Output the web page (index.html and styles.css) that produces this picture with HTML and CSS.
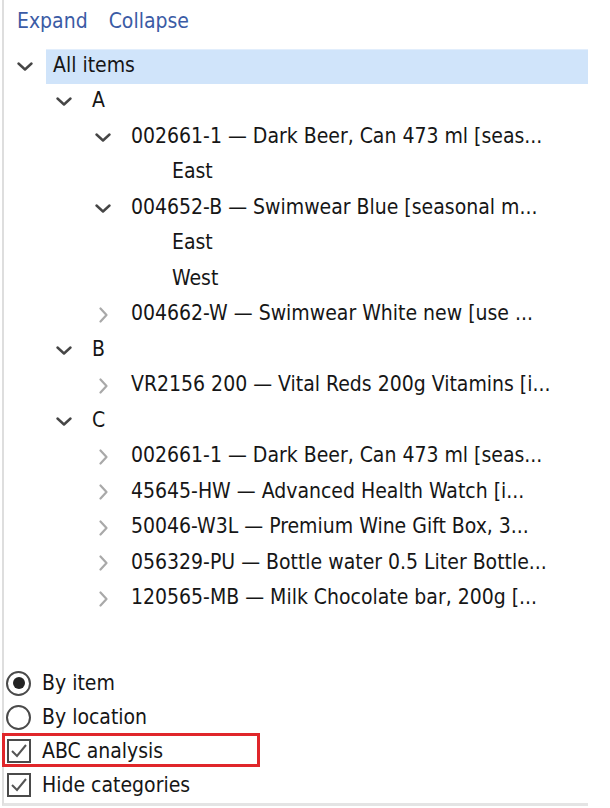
FILE: index.html
```html
<!DOCTYPE html>
<html>
<head>
<meta charset="utf-8">
<link rel="stylesheet" href="styles.css">
</head>
<body>
<div class="panel">
  <div class="toolbar">
    <span class="link">Expand</span>
    <span class="link">Collapse</span>
  </div>
  <div class="tree">
    <div class="row l0"><span class="tw"><svg width="16" height="9" viewBox="0 0 16 9"><polyline class="open" points="1.5,1.5 8,7.5 14.5,1.5"/></svg></span><span class="label selected">All items</span></div>
    <div class="row l1"><span class="tw"><svg width="16" height="9" viewBox="0 0 16 9"><polyline class="open" points="1.5,1.5 8,7.5 14.5,1.5"/></svg></span><span class="label">A</span></div>
    <div class="row l2"><span class="tw"><svg width="16" height="9" viewBox="0 0 16 9"><polyline class="open" points="1.5,1.5 8,7.5 14.5,1.5"/></svg></span><span class="label">002661-1 — Dark Beer, Can 473 ml [seas...</span></div>
    <div class="row l3"><span class="tw"></span><span class="label">East</span></div>
    <div class="row l2"><span class="tw"><svg width="16" height="9" viewBox="0 0 16 9"><polyline class="open" points="1.5,1.5 8,7.5 14.5,1.5"/></svg></span><span class="label">004652-B — Swimwear Blue [seasonal m...</span></div>
    <div class="row l3"><span class="tw"></span><span class="label">East</span></div>
    <div class="row l3"><span class="tw"></span><span class="label">West</span></div>
    <div class="row l2"><span class="tw"><svg width="9" height="16" viewBox="0 0 9 16"><polyline class="closed" points="1.5,1.5 7.5,8 1.5,14.5"/></svg></span><span class="label">004662-W — Swimwear White new [use ...</span></div>
    <div class="row l1"><span class="tw"><svg width="16" height="9" viewBox="0 0 16 9"><polyline class="open" points="1.5,1.5 8,7.5 14.5,1.5"/></svg></span><span class="label">B</span></div>
    <div class="row l2"><span class="tw"><svg width="9" height="16" viewBox="0 0 9 16"><polyline class="closed" points="1.5,1.5 7.5,8 1.5,14.5"/></svg></span><span class="label">VR2156 200 — Vital Reds 200g Vitamins [i...</span></div>
    <div class="row l1"><span class="tw"><svg width="16" height="9" viewBox="0 0 16 9"><polyline class="open" points="1.5,1.5 8,7.5 14.5,1.5"/></svg></span><span class="label">C</span></div>
    <div class="row l2"><span class="tw"><svg width="9" height="16" viewBox="0 0 9 16"><polyline class="closed" points="1.5,1.5 7.5,8 1.5,14.5"/></svg></span><span class="label">002661-1 — Dark Beer, Can 473 ml [seas...</span></div>
    <div class="row l2"><span class="tw"><svg width="9" height="16" viewBox="0 0 9 16"><polyline class="closed" points="1.5,1.5 7.5,8 1.5,14.5"/></svg></span><span class="label">45645-HW — Advanced Health Watch [i...</span></div>
    <div class="row l2"><span class="tw"><svg width="9" height="16" viewBox="0 0 9 16"><polyline class="closed" points="1.5,1.5 7.5,8 1.5,14.5"/></svg></span><span class="label">50046-W3L — Premium Wine Gift Box, 3...</span></div>
    <div class="row l2"><span class="tw"><svg width="9" height="16" viewBox="0 0 9 16"><polyline class="closed" points="1.5,1.5 7.5,8 1.5,14.5"/></svg></span><span class="label">056329-PU — Bottle water 0.5 Liter Bottle...</span></div>
    <div class="row l2"><span class="tw"><svg width="9" height="16" viewBox="0 0 9 16"><polyline class="closed" points="1.5,1.5 7.5,8 1.5,14.5"/></svg></span><span class="label">120565-MB — Milk Chocolate bar, 200g [...</span></div>
  </div>
  <div class="options">
    <div class="opt"><span class="radio checked"></span><span class="otext">By item</span></div>
    <div class="opt"><span class="radio"></span><span class="otext">By location</span></div>
    <div class="opt marked"><span class="check"><svg width="20" height="20" viewBox="0 0 20 20"><polyline points="3,10 8,15 17,4"/></svg></span><span class="otext">ABC analysis</span></div>
    <div class="opt"><span class="check"><svg width="20" height="20" viewBox="0 0 20 20"><polyline points="3,10 8,15 17,4"/></svg></span><span class="otext">Hide categories</span></div>
  </div>
</div>
</body>
</html>
```
FILE: styles.css
```css
html, body {
  margin: 0;
  padding: 0;
  background: #ffffff;
}
body {
  font-family: "DejaVu Sans Condensed", "DejaVu Sans", sans-serif;
  font-stretch: condensed;
  font-size: 21px;
  color: #161616;
}
.panel {
  margin-left: 2px;
  width: 584px;
  height: 803px;
  border-left: 2px solid #dedede;
  border-bottom: 3px solid #e4e4e4;
  display: flex;
  flex-direction: column;
}
.toolbar {
  height: 41px;
  display: flex;
  align-items: center;
  gap: 21px;
  padding-left: 13px;
}
.link {
  color: #3b5ba5;
}
.tree {
  padding-top: 7.5px;
  flex: 1;
}
.row {
  height: 35.5px;
  display: flex;
  align-items: stretch;
  white-space: nowrap;
}
.l0 { padding-left: 5px; }
.l1 { padding-left: 44px; }
.l2 { padding-left: 83px; }
.l3 { padding-left: 124px; }
.tw {
  width: 32px;
  flex: none;
  display: flex;
  align-items: center;
  justify-content: center;
}
.tw svg {
  display: block;
}
.open {
  fill: none;
  stroke: #464646;
  stroke-width: 2.4;
  stroke-linecap: round;
  stroke-linejoin: round;
}
.closed {
  fill: none;
  stroke: #a9a9a9;
  stroke-width: 2.2;
  stroke-linecap: round;
  stroke-linejoin: round;
}
.label {
  margin-left: 5px;
  padding-left: 7px;
  padding-bottom: 3px;
  flex: 1;
  display: flex;
  align-items: center;
}
.label.selected {
  background: #d0e4fa;
  border-top: 1px solid #e2eefc;
}
.options {
  padding-bottom: 1px;
  padding-left: 2px;
}
.opt {
  height: 34px;
  display: flex;
  align-items: center;
  position: relative;
}
.otext {
  margin-left: 11px;
}
.radio {
  width: 25px;
  height: 25px;
  box-sizing: border-box;
  border: 2px solid #4a4a4a;
  border-radius: 50%;
  display: flex;
  align-items: center;
  justify-content: center;
  flex: none;
}
.radio.checked::before {
  content: "";
  width: 12px;
  height: 12px;
  border-radius: 50%;
  background: #222222;
}
.check {
  width: 24px;
  height: 24px;
  margin-left: 1px;
  box-sizing: border-box;
  border: 2px solid #4a4a4a;
  display: flex;
  align-items: center;
  justify-content: center;
  flex: none;
}
.check svg {
  display: block;
}
.check polyline {
  fill: none;
  stroke: #555555;
  stroke-width: 2;
}
.marked::after {
  content: "";
  position: absolute;
  top: -1px;
  left: -4px;
  width: 258px;
  height: 34px;
  box-sizing: border-box;
  border: 3px solid #e0262a;
}
```
